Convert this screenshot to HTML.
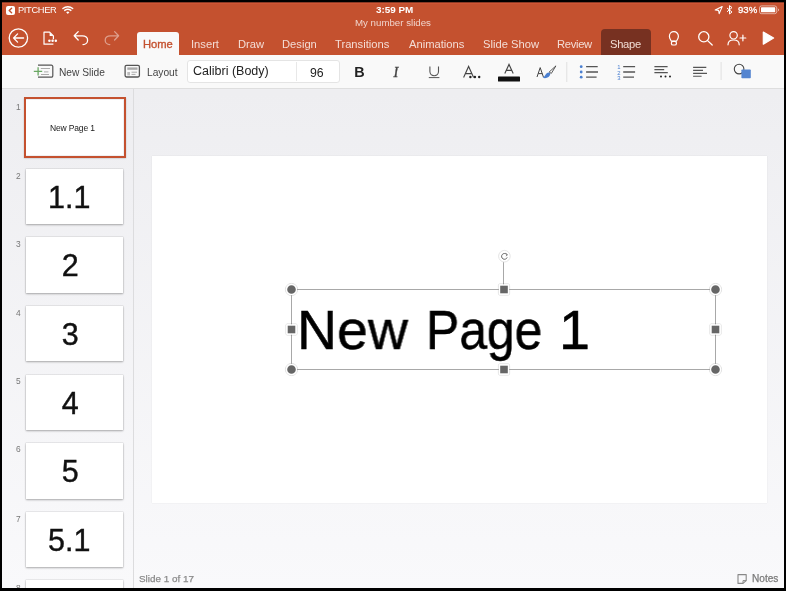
<!DOCTYPE html>
<html><head><meta charset="utf-8">
<style>
*{margin:0;padding:0;box-sizing:border-box}
html,body{width:786px;height:591px;overflow:hidden;background:#000;font-family:"Liberation Sans",sans-serif}
body{position:relative}
.a{position:absolute;white-space:nowrap;line-height:1;will-change:transform}
#app{position:absolute;left:2px;top:2px;width:782px;height:586px;background:linear-gradient(to bottom,#eeeef1 0px,#eeeef1 90px,#f9f9fb 586px);overflow:hidden}
#hdr{position:absolute;left:2px;top:2px;width:782px;height:53px;background:#c4512f}
.st{color:#fff;font-size:9.3px}
.tab{will-change:transform;position:absolute;top:38.6px;color:rgba(255,255,255,.8);font-size:11.2px;line-height:1;white-space:nowrap}
#ribbon{position:absolute;left:2px;top:55px;width:782px;height:34px;background:#f9f9f9;border-bottom:1px solid #dedede}
.rt{will-change:transform;position:absolute;color:#444;font-size:10.2px;line-height:1;white-space:nowrap}
#pane{position:absolute;left:2px;top:89px;width:132px;height:499px;background:transparent;border-right:1px solid #dcdcde}
.th{position:absolute;left:26.2px;width:96.9px;height:55.6px;background:#fff;box-shadow:0 0 0 0.5px rgba(0,0,0,.1),0 1px 2px rgba(0,0,0,.28);overflow:hidden}
.num{will-change:transform;position:absolute;left:16px;font-size:8.4px;color:#777;line-height:1}
.big{will-change:transform;position:absolute;left:0;width:100%;padding-right:8.4px;text-align:center;font-size:30.5px;color:#111;line-height:1;-webkit-text-stroke:0.4px #111}
svg{position:absolute;left:0;top:0}
.mt{font-size:55.7px;color:#000;transform-origin:0 0;-webkit-text-stroke:0.5px #000}
</style></head><body>
<div id="app"></div>
<div id="hdr"></div>
<div class="a" style="left:2px;top:2px;width:782px;height:1px;background:#8a3a24"></div>
<div class="a" style="left:2px;top:3px;width:782px;height:1px;background:#cf5535"></div>
<!-- status bar text -->
<div class="a st" style="left:18.3px;top:5.5px;letter-spacing:-0.35px">PITCHER</div>
<div class="a st" style="left:375.5px;top:5px;font-weight:bold;font-size:9.9px">3:59 PM</div>
<div class="a st" style="left:355px;top:17.8px;font-size:9.7px;color:rgba(255,255,255,.75)">My number slides</div>
<div class="a st" style="left:737.5px;top:4.8px;font-size:9.6px;-webkit-text-stroke:0.3px #fff">93%</div>
<!-- tabs -->
<div class="a" style="left:137px;top:32px;width:41.5px;height:23px;background:#f9f9f9;border-radius:3px 3px 0 0"></div>
<div class="tab" style="left:143px;color:#c4512f;-webkit-text-stroke:0.35px #c4512f">Home</div>
<div class="tab" style="left:190.5px">Insert</div>
<div class="tab" style="left:237.5px">Draw</div>
<div class="tab" style="left:281.5px">Design</div>
<div class="tab" style="left:335px">Transitions</div>
<div class="tab" style="left:408.5px">Animations</div>
<div class="tab" style="left:483px">Slide Show</div>
<div class="tab" style="left:556.5px;letter-spacing:-0.3px">Review</div>
<div class="a" style="left:601px;top:29px;width:49.5px;height:26px;background:#773121;border-radius:4px 4px 0 0"></div>
<div class="tab" style="left:610.2px;letter-spacing:-0.3px;color:rgba(255,240,232,.9)">Shape</div>

<div id="ribbon"></div>
<div class="rt" style="left:59px;top:67.5px">New Slide</div>
<div class="rt" style="left:147px;top:67.5px">Layout</div>
<div class="a" style="left:186.5px;top:60px;width:152.5px;height:23px;background:#fff;border:1px solid #e4e4e4;border-radius:3px"></div>
<div class="a" style="left:295.5px;top:62px;width:1px;height:19px;background:#e8e8e8"></div>
<div class="rt" style="left:193px;top:65px;font-size:12.5px;color:#222">Calibri (Body)</div>
<div class="rt" style="left:310px;top:66.5px;font-size:12.3px;color:#222">96</div>

<div id="pane"></div>
<div class="th" style="top:99.90px;box-shadow:none"></div>
<div class="a" style="left:23.7px;top:97.3px;width:102.2px;height:60.5px;border:2.3px solid #c4512f;box-shadow:0 0.5px 1.5px rgba(0,0,0,.25)"></div>
<div class="a" style="left:49.5px;top:124.3px;font-size:8.5px;letter-spacing:-0.15px;color:#1a1a1a">New Page 1</div>
<div class="num" style="top:103px">1</div>
<div class="th" style="top:168.55px"><div class="big" style="top:13px;left:-1.5px">1.1</div></div>
<div class="num" style="top:172px">2</div>
<div class="th" style="top:237.20px"><div class="big" style="top:13px">2</div></div>
<div class="num" style="top:239.6px">3</div>
<div class="th" style="top:305.85px"><div class="big" style="top:13px">3</div></div>
<div class="num" style="top:309px">4</div>
<div class="th" style="top:374.50px"><div class="big" style="top:13px">4</div></div>
<div class="num" style="top:377px">5</div>
<div class="th" style="top:443.15px"><div class="big" style="top:13px">5</div></div>
<div class="num" style="top:445.3px">6</div>
<div class="th" style="top:511.80px"><div class="big" style="top:13px;left:-1.2px">5.1</div></div>
<div class="num" style="top:515px">7</div>
<div class="th" style="top:580.45px"></div>
<div class="num" style="top:584px">8</div>

<!-- slide -->
<div class="a" style="left:151.6px;top:155.8px;width:614.8px;height:347.2px;background:#fff;box-shadow:0 0 1px rgba(0,0,0,.12)"></div>
<div class="a mt" style="left:297px;top:302.8px;transform:scaleX(0.995)">New</div>
<div class="a mt" style="left:425.5px;top:302.8px;transform:scaleX(0.895)">Page</div>
<div class="a mt" style="left:558.5px;top:302.8px">1</div>

<div class="a" style="left:138.5px;top:574px;font-size:9.9px;color:#8a8a8a;-webkit-text-stroke:0.25px #8a8a8a">Slide 1 of 17</div>
<div class="a" style="left:752px;top:574px;font-size:10.1px;color:#7a7a7a;-webkit-text-stroke:0.25px #7a7a7a">Notes</div>

<svg width="786" height="591" viewBox="0 0 786 591" fill="none">
  <!-- pitcher back -->
  <rect x="6" y="6" width="9" height="9" rx="2" fill="#fff"/>
  <path d="M11.6 8.2 L9.2 10.5 L11.6 12.8" stroke="#c4512f" stroke-width="1.4" stroke-linecap="round" stroke-linejoin="round"/>
  <!-- wifi -->
  <g transform="translate(0,-0.6)">
  <g stroke="#fff" stroke-width="1.4" stroke-linecap="round">
    <path d="M62.9 9.1 A7.6 7.6 0 0 1 72.7 9.1"/>
    <path d="M64.7 11.0 A5.0 5.0 0 0 1 70.9 11.0"/>
  </g>
  <path d="M66.2 12.8 A2.6 2.6 0 0 1 69.4 12.8 L67.8 14.5 Z" fill="#fff"/>
  </g>
  <!-- location -->
  <path d="M722.2 6.6 L715.2 10 L718.6 10.4 L719.2 13.6 Z" stroke="#fff" stroke-width="1.1" stroke-linejoin="round"/>
  <!-- bluetooth -->
  <path d="M727 8 L732 12 L729.5 14 L729.5 5.6 L732 7.6 L727 11.8" stroke="#fff" stroke-width="1" stroke-linejoin="round"/>
  <!-- battery -->
  <rect x="759.5" y="5.9" width="17.2" height="7.8" rx="2" stroke="rgba(255,255,255,.55)" stroke-width="1"/>
  <rect x="761" y="7.3" width="14.2" height="5" rx="0.6" fill="#fff"/>
  <path d="M777.8 8.5 A1.6 1.6 0 0 1 777.8 11.3" stroke="rgba(255,255,255,.55)" stroke-width="1"/>

  <!-- back circle -->
  <g stroke="#fff" stroke-width="1.3" stroke-linecap="round" stroke-linejoin="round">
    <circle cx="18.4" cy="38" r="9.2"/>
    <path d="M13.6 38 H23.6 M17.6 33.9 L13.6 38 L17.6 42.1"/>
  </g>
  <!-- file icon -->
  <g stroke="#fff" stroke-width="1.2" stroke-linejoin="round">
    <path d="M53.4 39.2 V36 L49.6 32.2 H44 V44.2 H53.4"/>
  </g>
  <path d="M49.6 32.2 L53.4 36 H49.6 Z" fill="#fff"/>
  <circle cx="49.4" cy="40.8" r="1.25" fill="#fff"/>
  <circle cx="52.6" cy="40.8" r="1.25" fill="#fff"/>
  <circle cx="55.8" cy="40.8" r="1.25" fill="#fff"/>
  <!-- undo / redo -->
  <g stroke="#fff" stroke-width="1.3" stroke-linecap="round" stroke-linejoin="round">
    <path d="M78.2 31.6 L74.2 35.8 L78.2 40 M74.4 35.8 H82.4 C85.6 35.8 87.6 37.8 87.6 40.2 C87.6 42.6 85.6 44.6 83 44.6"/>
  </g>
  <g stroke="rgba(255,255,255,.45)" stroke-width="1.3" stroke-linecap="round" stroke-linejoin="round">
    <path d="M114.6 31.6 L118.6 35.8 L114.6 40 M118.4 35.8 H110.4 C107.2 35.8 105.2 37.8 105.2 40.2 C105.2 42.6 107.2 44.6 109.8 44.6"/>
  </g>
  <!-- lightbulb -->
  <g stroke="#fff" stroke-width="1.2" stroke-linejoin="round">
    <path d="M671.4 41.2 C670.6 39.6 669.4 38.6 669.4 36.2 A4.5 4.5 0 0 1 678.4 36.2 C678.4 38.6 677.2 39.6 676.4 41.2 Z"/>
    <rect x="671.4" y="41.4" width="5" height="3.6" rx="1.6"/>
  </g>
  <!-- search -->
  <g stroke="#fff" stroke-width="1.3" stroke-linecap="round">
    <circle cx="703.8" cy="36.8" r="5.1"/>
    <path d="M707.6 40.6 L712.2 45"/>
  </g>
  <!-- person + -->
  <g stroke="#fff" stroke-width="1.2" stroke-linecap="round">
    <circle cx="733.6" cy="35.3" r="3.7"/>
    <path d="M728 44.8 C728 41.8 730.4 40 733.6 40 C736.8 40 739.2 41.8 739.2 44.8"/>
    <path d="M740 38 H745.8 M742.9 35.2 V40.8"/>
  </g>
  <!-- play -->
  <path d="M763.3 32 L773.6 38.1 L763.3 44.2 Z" fill="#fff" stroke="#fff" stroke-width="1.2" stroke-linejoin="round"/>

  <!-- new slide icon -->
  <g stroke="#555" stroke-width="1.2" stroke-linejoin="round">
    <path d="M38 65.2 H51.4 A1.4 1.4 0 0 1 52.8 66.6 V75.8 A1.4 1.4 0 0 1 51.4 77.2 H38"/>
  </g>
  <g stroke="#aaa" stroke-width="1">
    <path d="M40.8 68.5 H50 M44 71.9 H48.4 M41 74.5 H49"/>
  </g>
  <g stroke="#6aa863" stroke-width="1.3">
    <path d="M33.8 71.3 H42.2 M38.1 67.2 V75.5"/>
  </g>
  <!-- layout icon -->
  <rect x="125.1" y="65.4" width="14.3" height="11.6" rx="1.4" stroke="#555" stroke-width="1.3"/>
  <rect x="127.3" y="67.4" width="10.2" height="2.4" fill="#aaa"/>
  <rect x="127.3" y="72" width="2.7" height="3.4" fill="#bbb"/>
  <path d="M131.5 72.2 H137 M131.5 74.4 H135.5" stroke="#aaa" stroke-width="1"/>

  <!-- B I U -->
  <text x="354.2" y="76.9" font-family="Liberation Sans" font-weight="bold" font-size="14.4" fill="#222">B</text>
  <text x="393.4" y="76.9" font-family="Liberation Serif" font-style="italic" font-size="14.4" fill="#444" stroke="#444" stroke-width="0.35">I</text>
  <path d="M429.9 66.4 V71.6 A4.3 4.1 0 0 0 438.5 71.6 V66.4" stroke="#555" stroke-width="1.1"/>
  <path d="M428.8 77.6 H439.4" stroke="#555" stroke-width="1"/>
  <!-- A... -->
  <path d="M463.6 77.4 L468.6 66.4 L473.6 77.4 M465.4 73.6 H471.8" stroke="#444" stroke-width="1.1"/>
  <circle cx="470.4" cy="77" r="1.2" fill="#222"/>
  <circle cx="474.9" cy="77" r="1.2" fill="#222"/>
  <circle cx="479.2" cy="77" r="1.2" fill="#222"/>
  <!-- font color A -->
  <path d="M504.8 73.6 L509 64.4 L513.2 73.6 M506.4 70.4 H511.6" stroke="#444" stroke-width="1.1"/>
  <rect x="498" y="76.6" width="22" height="5" rx="0.6" fill="#111"/>
  <!-- highlighter A -->
  <path d="M537 77 L540.2 67.6 L543.4 77 M538.2 73.6 H542.2" stroke="#444" stroke-width="1"/>
  <path d="M549.2 72 L555.9 65.9 L551.3 73.4 Z" stroke="#444" stroke-width="0.9" stroke-linejoin="round" fill="#fff"/>
  <path d="M542.6 77.8 C544.6 77.4 545.2 74.6 547 73.1 C548.6 71.8 550.6 72.5 550.2 74.6 C549.8 77 546.6 79 542.6 77.8 Z" fill="#4a7fd0"/>
  <!-- separators -->
  <path d="M566.8 62 V82 M721.1 62 V80" stroke="#e0e0e0" stroke-width="1"/>
  <!-- bullets -->
  <g fill="#4a7fd0"><circle cx="581.2" cy="66.7" r="1.4"/><circle cx="581.2" cy="72" r="1.4"/><circle cx="581.2" cy="77.2" r="1.4"/></g>
  <path d="M586.1 66.7 H597.7 M586.1 72 H598 M586.1 77.2 H596.6" stroke="#555" stroke-width="1.3"/>
  <!-- numbering -->
  <text x="617.2" y="69.2" font-family="Liberation Sans" font-size="5.9" fill="#4a7fd0">1</text>
  <text x="617.2" y="74.6" font-family="Liberation Sans" font-size="5.9" fill="#4a7fd0">2</text>
  <text x="617.2" y="80" font-family="Liberation Sans" font-size="5.9" fill="#4a7fd0">3</text>
  <path d="M623.2 66.7 H635.1 M623.2 72 H635.1 M623.2 77.2 H634" stroke="#555" stroke-width="1.3"/>
  <!-- paragraph more -->
  <path d="M654.4 66.6 H667.6 M654.4 69.6 H664.2 M654.4 72.6 H667.8" stroke="#555" stroke-width="1.2"/>
  <g fill="#222"><circle cx="661" cy="76.5" r="1"/><circle cx="665.5" cy="76.5" r="1"/><circle cx="670" cy="76.5" r="1"/></g>
  <!-- align left -->
  <path d="M693.1 67.4 H706.3 M693.1 70.4 H703 M693.1 73.4 H707 M693.1 76.3 H701.6" stroke="#555" stroke-width="1.1"/>
  <!-- shape icon -->
  <circle cx="739.1" cy="69.1" r="4.8" stroke="#444" stroke-width="1.1"/>
  <rect x="741.4" y="69.5" width="9.4" height="8.7" rx="0.8" fill="#5585d0"/>

  <!-- text box -->
  <rect x="291.5" y="289.5" width="424" height="80" stroke="#a8a8a8" stroke-width="1"/>
  <path d="M503.5 262 V289" stroke="#a8a8a8" stroke-width="1"/>
  <g fill="none" stroke="rgba(0,0,0,.13)" stroke-width="1">
    <circle cx="291.5" cy="289.5" r="6.1"/>
    <circle cx="715.5" cy="289.5" r="6.1"/>
    <circle cx="291.5" cy="369.5" r="6.1"/>
    <circle cx="715.5" cy="369.5" r="6.1"/>
    <rect x="498.4" y="283.9" width="11.2" height="11.2" rx="1.5"/>
    <rect x="498.4" y="363.9" width="11.2" height="11.2" rx="1.5"/>
    <rect x="285.9" y="323.9" width="11.2" height="11.2" rx="1.5"/>
    <rect x="709.9" y="323.9" width="11.2" height="11.2" rx="1.5"/>
  </g>
  <g fill="#666" stroke="#fff" stroke-width="1.4">
    <circle cx="291.5" cy="289.5" r="5"/>
    <circle cx="715.5" cy="289.5" r="5"/>
    <circle cx="291.5" cy="369.5" r="5"/>
    <circle cx="715.5" cy="369.5" r="5"/>
    <rect x="499.5" y="285" width="9" height="9"/>
    <rect x="499.5" y="365" width="9" height="9"/>
    <rect x="287" y="325" width="9" height="9"/>
    <rect x="711" y="325" width="9" height="9"/>
  </g>
  <circle cx="504.4" cy="256.2" r="5.8" fill="#fff" stroke="#ddd" stroke-width="0.8"/>
  <path d="M506.6 254.4 A2.9 2.9 0 1 0 507.2 257.4" stroke="#666" stroke-width="1"/>
  <path d="M505.6 253.4 L507.4 254.6 L506.2 256.2" stroke="#666" stroke-width="0.9"/>

  <!-- notes icon -->
  <path d="M738 574.6 H746.2 V580.6 L743 583.4 H738 Z" stroke="#888" stroke-width="1.1" stroke-linejoin="round"/>
  <path d="M746.2 580.6 H743 V583.4" stroke="#888" stroke-width="1"/>
</svg>
<div class="a" style="left:0;top:588px;width:786px;height:3px;background:#000"></div>
<div class="a" style="left:784px;top:0;width:2px;height:591px;background:#000"></div>
<div class="a" style="left:0;top:0;width:786px;height:2px;background:#000"></div>
<div class="a" style="left:0;top:0;width:2px;height:591px;background:#000"></div>
</body></html>
